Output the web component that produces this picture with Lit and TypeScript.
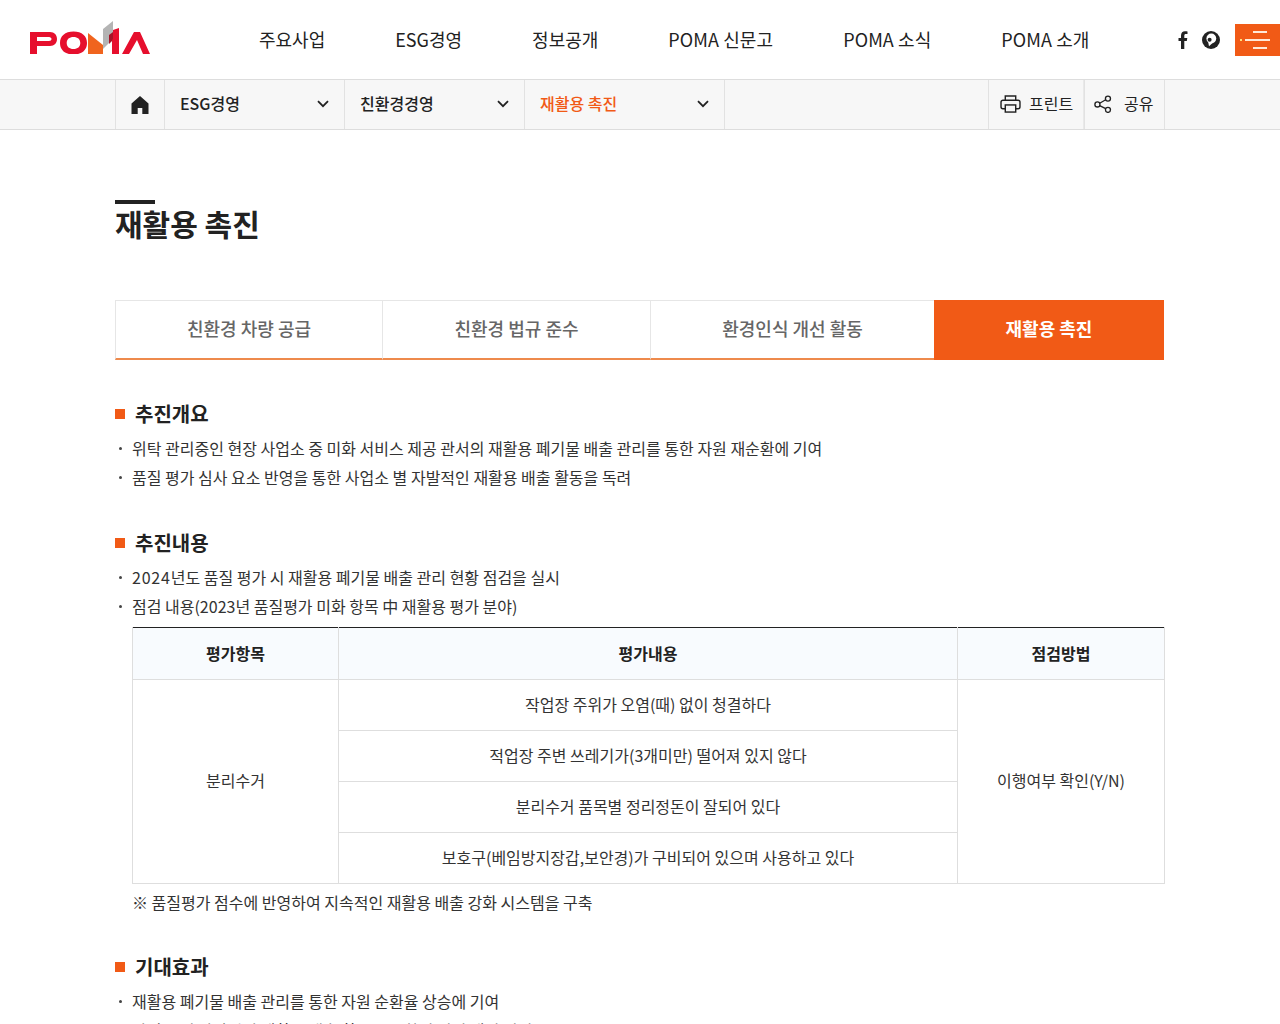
import { LitElement, html, css } from 'lit';
import { customElement } from 'lit/decorators.js';

const chevron = html`<svg class="chev" width="12" height="8" viewBox="0 0 12 8"><path d="M1 1.200l5 5 5-5" fill="none" stroke="#222" stroke-width="1.800"/></svg>`;

const logo = html`<svg width="120" height="33" viewBox="0 0 120 33">
  <path fill="#e60f2d" fill-rule="evenodd" d="M0 11h20c4.500 0 7 3 7 7s-2.500 7-7 7H7v8H0zM7 16v4h12c1.500 0 2.500-1 2.500-2s-1-2-2.500-2z"/>
  <path fill="#e60f2d" fill-rule="evenodd" d="M43.500 10.500c8.500 0 13.500 4.500 13.500 11.500s-5 11.500-13.500 11.500S30 29 30 22s5-11.500 13.500-11.500zm0 5.500c-4.200 0-6.800 2.200-6.800 6s2.600 6 6.800 6 6.800-2.200 6.800-6-2.600-6-6.800-6z"/>
  <path fill="#f0641e" d="M58 12l15 12v9H58z"/>
  <path fill="#b4b4b4" d="M73 8l10-8v18l-10 10z"/>
  <path fill="#a51428" d="M79 14l4-3v8l-4 4z"/>
  <path fill="#e60f2d" d="M83 9l6-2v26h-7V19l1-1z"/>
  <path fill="#e60f2d" d="M92 33l12-22h6l10 22h-7l-6-14-8 14z"/>
</svg>`;

const homeIcon = html`<svg width="20" height="20" viewBox="0 0 20 20"><path fill="#222" d="M10 1l8.500 7.500V19H12.300v-6H7.700v6H1.500V8.500z"/></svg>`;

const printIcon = html`<svg width="21" height="18" viewBox="0 0 22 19" fill="none" stroke="#222" stroke-width="1.500">
  <path d="M5.500 5.500V1h11v4.500"/><path d="M5.500 14.500H3a2 2 0 0 1-2-2V7.500a2 2 0 0 1 2-2h16a2 2 0 0 1 2 2v5a2 2 0 0 1-2 2h-2.500"/>
  <rect x="5.500" y="10.500" width="11" height="7.500"/></svg>`;

const shareIcon = html`<svg width="18" height="18" viewBox="0 0 20 20" fill="none" stroke="#222" stroke-width="1.500">
  <circle cx="3.800" cy="10.500" r="2.800"/><circle cx="15.500" cy="4" r="2.800"/><circle cx="15.500" cy="16.500" r="2.800"/>
  <path d="M6.300 9.200l6.700-3.900M6.300 11.800l6.700 3.400"/></svg>`;

const fbIcon = html`<svg width="10" height="18" viewBox="0 0 10 18"><path fill="#222" d="M3 18V10H.500V7H3V4.500C3 1.800 4.600.300 7 .300c1 0 2 .1 2.500.2V3H8C6.700 3 6.300 3.600 6.300 4.600V7h3l-.5 3H6.300v8z"/></svg>`;

const blogIcon = html`<svg width="18" height="18" viewBox="0 0 18 18"><circle cx="9" cy="9" r="9" fill="#222"/><circle cx="9.300" cy="7.500" r="4.900" fill="#fff"/><path fill="#fff" d="M6 10l4.500 2-3.500 3.300z"/><circle cx="7.600" cy="8.800" r="2" fill="#222"/></svg>`;

const rows = [
  '작업장 주위가 오염(때) 없이 청결하다',
  '적업장 주변 쓰레기가(3개미만) 떨어져 있지 않다',
  '분리수거 품목별 정리정돈이 잘되어 있다',
  '보호구(베임방지장갑,보안경)가 구비되어 있으며 사용하고 있다',
];

@customElement('app-root')
export class AppRoot extends LitElement {
  static styles = css`
    :host {
      display: block;
      height: 1024px;
      overflow: hidden;
      background: #fff;
      color: #222;
      font-family: 'Noto Sans CJK KR', 'Noto Sans', sans-serif;
    }
    header {
      height: 79px;
      display: flex;
      align-items: center;
    }
    .logo {
      margin-left: 30px;
      width: 120px;
      height: 33px;
      margin-top: -4px;
      flex: none;
    }
    nav {
      display: flex;
      margin-left: 109px;
      font-size: 18px;
      gap: 70px;
      color: #222;
      padding-bottom: 2px;
    }
    nav .en { letter-spacing: 0.1px; }
    .sns {
      margin-left: auto;
      display: flex;
      align-items: center;
      gap: 14px;
      margin-right: 15px;
    }
    .ham {
      width: 45px;
      height: 32px;
      background: #f15a16;
      display: flex;
      flex-direction: column;
      align-items: flex-end;
      justify-content: center;
      gap: 6px;
      padding-right: 10px;
      box-sizing: border-box;
      margin-top: 1px;
    }
    .ham i { display: block; height: 2px; background: #ffe9d8; width: 14px; margin-right: 3px; }
    .ham i.mid { width: 25px; margin-right: 0; position: relative; }
    .ham i.mid::before {
      content: '';
      position: absolute;
      left: -5px;
      top: 0;
      width: 2px;
      height: 2px;
      background: #ffe27a;
    }
    .bar {
      height: 51px;
      background: #f7f7f7;
      border-top: 1px solid #ddd;
      border-bottom: 1px solid #ddd;
      box-sizing: border-box;
      padding: 0 115px;
      display: flex;
    }
    .home {
      width: 50px;
      box-sizing: border-box;
      border-left: 1px solid #e2e2e2;
      border-right: 1px solid #e2e2e2;
      display: flex;
      align-items: center;
      justify-content: center;
    }
    .drop {
      box-sizing: border-box;
      border-right: 1px solid #e2e2e2;
      display: flex;
      align-items: center;
      justify-content: space-between;
      padding: 0 15px 2px;
      font-size: 16px;
      font-weight: 500;
      width: 180px;
    }
    .drop span { margin-top: -2px; }
    .drop.wide { width: 200px; color: #f15a16; }
    .spacer { flex: 1; }
    .tool {
      box-sizing: border-box;
      border-left: 1px solid #e2e2e2;
      display: flex;
      align-items: center;
      font-size: 16px;
      padding-bottom: 1px;
    }
    .tool span { margin-top: -3px; }
    .tool.print { width: 96px; padding-left: 11px; gap: 8px; border-right: 1px solid #e9e9e9; }
    .tool.share { width: 81px; padding-left: 9px; gap: 12px; border-right: 1px solid #e2e2e2; }
    main { padding: 71px 115px 0; }
    h1 {
      margin: 0;
      font-size: 30px;
      font-weight: 700;
      line-height: 44px;
      height: 44px;
      position: relative;
      color: #222;
    }
    h1::before {
      content: '';
      position: absolute;
      left: 0;
      top: -1px;
      width: 40px;
      height: 4px;
      background: #222;
    }
    .tabs {
      display: flex;
      margin-top: 55px;
      height: 60px;
    }
    .tab {
      box-sizing: border-box;
      border-top: 1px solid #e6e6e6;
      border-left: 1px solid #e6e6e6;
      border-bottom: 2px solid #ee8a4c;
      display: flex;
      align-items: center;
      justify-content: center;
      font-size: 18px;
      font-weight: 500;
      color: #666;
      padding-bottom: 4px;
    }
    .tab.on {
      background: #f15a16;
      color: #fff;
      border: 0;
      font-weight: 700;
      padding-bottom: 5px;
    }
    h2 {
      margin: 0;
      font-size: 20px;
      font-weight: 700;
      line-height: 30px;
      display: flex;
      align-items: center;
      gap: 10px;
      color: #222;
    }
    h2::before {
      content: '';
      width: 10px;
      height: 10px;
      background: #f15a16;
    }
    .sec1 { margin-top: 39px; }
    .sec { margin-top: 36px; }
    .sec.last { margin-top: 35px; }
    ul {
      list-style: none;
      margin: 5px 0 0;
      padding: 0;
      font-size: 16px;
      color: #333;
    }
    li {
      line-height: 29px;
      padding-left: 17px;
      position: relative;
    }
    li::before {
      content: '';
      position: absolute;
      left: 4px;
      top: 13px;
      width: 3px;
      height: 3px;
      border-radius: 50%;
      background: #444;
    }
    .num { letter-spacing: 0.8px; }
    table {
      margin: 6px 0 0 17px;
      width: 1032px;
      border-collapse: collapse;
      table-layout: fixed;
      border-top: 1px solid #222;
      font-size: 16px;
      color: #333;
    }
    th, td {
      border: 1px solid #dedede;
      text-align: center;
      font-weight: 400;
      height: 51px;
      padding: 0 0 2px;
      box-sizing: border-box;
    }
    td.merged { padding-bottom: 4px; }
    tr:first-child th { border-top: 0; background: #f8fbfe; font-weight: 700; height: 52px; color: #222; }
    .note {
      margin: 4px 0 0 17px;
      font-size: 16px;
      line-height: 29px;
      color: #333;
    }
  `;

  render() {
    return html`
      <header>
        <div class="logo">${logo}</div>
        <nav>
          <span>주요사업</span><span>ESG경영</span><span>정보공개</span><span class="en">POMA 신문고</span><span class="en">POMA 소식</span><span class="en">POMA 소개</span>
        </nav>
        <div class="sns">${fbIcon}${blogIcon}</div>
        <div class="ham"><i></i><i class="mid"></i><i></i></div>
      </header>
      <div class="bar">
        <div class="home">${homeIcon}</div>
        <div class="drop"><span>ESG경영</span>${chevron}</div>
        <div class="drop"><span>친환경경영</span>${chevron}</div>
        <div class="drop wide"><span>재활용 촉진</span>${chevron}</div>
        <div class="spacer"></div>
        <div class="tool print">${printIcon}<span>프린트</span></div>
        <div class="tool share">${shareIcon}<span>공유</span></div>
      </div>
      <main>
        <h1>재활용 촉진</h1>
        <div class="tabs">
          <div class="tab" style="width:267px">친환경 차량 공급</div>
          <div class="tab" style="width:268px">친환경 법규 준수</div>
          <div class="tab" style="width:284px">환경인식 개선 활동</div>
          <div class="tab on" style="width:230px">재활용 촉진</div>
        </div>
        <section class="sec1">
          <h2>추진개요</h2>
          <ul>
            <li>위탁 관리중인 현장 사업소 중 미화 서비스 제공 관서의 재활용 폐기물 배출 관리를 통한 자원 재순환에 기여</li>
            <li>품질 평가 심사 요소 반영을 통한 사업소 별 자발적인 재활용 배출 활동을 독려</li>
          </ul>
        </section>
        <section class="sec">
          <h2>추진내용</h2>
          <ul>
            <li><span class="num">2024</span>년도 품질 평가 시 재활용 폐기물 배출 관리 현황 점검을 실시</li>
            <li>점검 내용(2023년 품질평가 미화 항목 中 재활용 평가 분야)</li>
          </ul>
          <table>
            <colgroup><col style="width:206px" /><col style="width:619px" /><col style="width:207px" /></colgroup>
            <tr><th>평가항목</th><th>평가내용</th><th>점검방법</th></tr>
            ${rows.map((r, i) => html`<tr>
              ${i === 0 ? html`<td class="merged" rowspan="4">분리수거</td>` : ''}
              <td>${r}</td>
              ${i === 0 ? html`<td class="merged" rowspan="4">이행여부 확인(Y/N)</td>` : ''}
            </tr>`)}
          </table>
          <p class="note">※ 품질평가 점수에 반영하여 지속적인 재활용 배출 강화 시스템을 구축</p>
        </section>
        <section class="sec last">
          <h2>기대효과</h2>
          <ul>
            <li>재활용 폐기물 배출 관리를 통한 자원 순환율 상승에 기여</li>
            <li>사업소 별 자발적인 재활용 배출 활동으로 환경 인식 개선 기여</li>
          </ul>
        </section>
      </main>
    `;
  }
}
